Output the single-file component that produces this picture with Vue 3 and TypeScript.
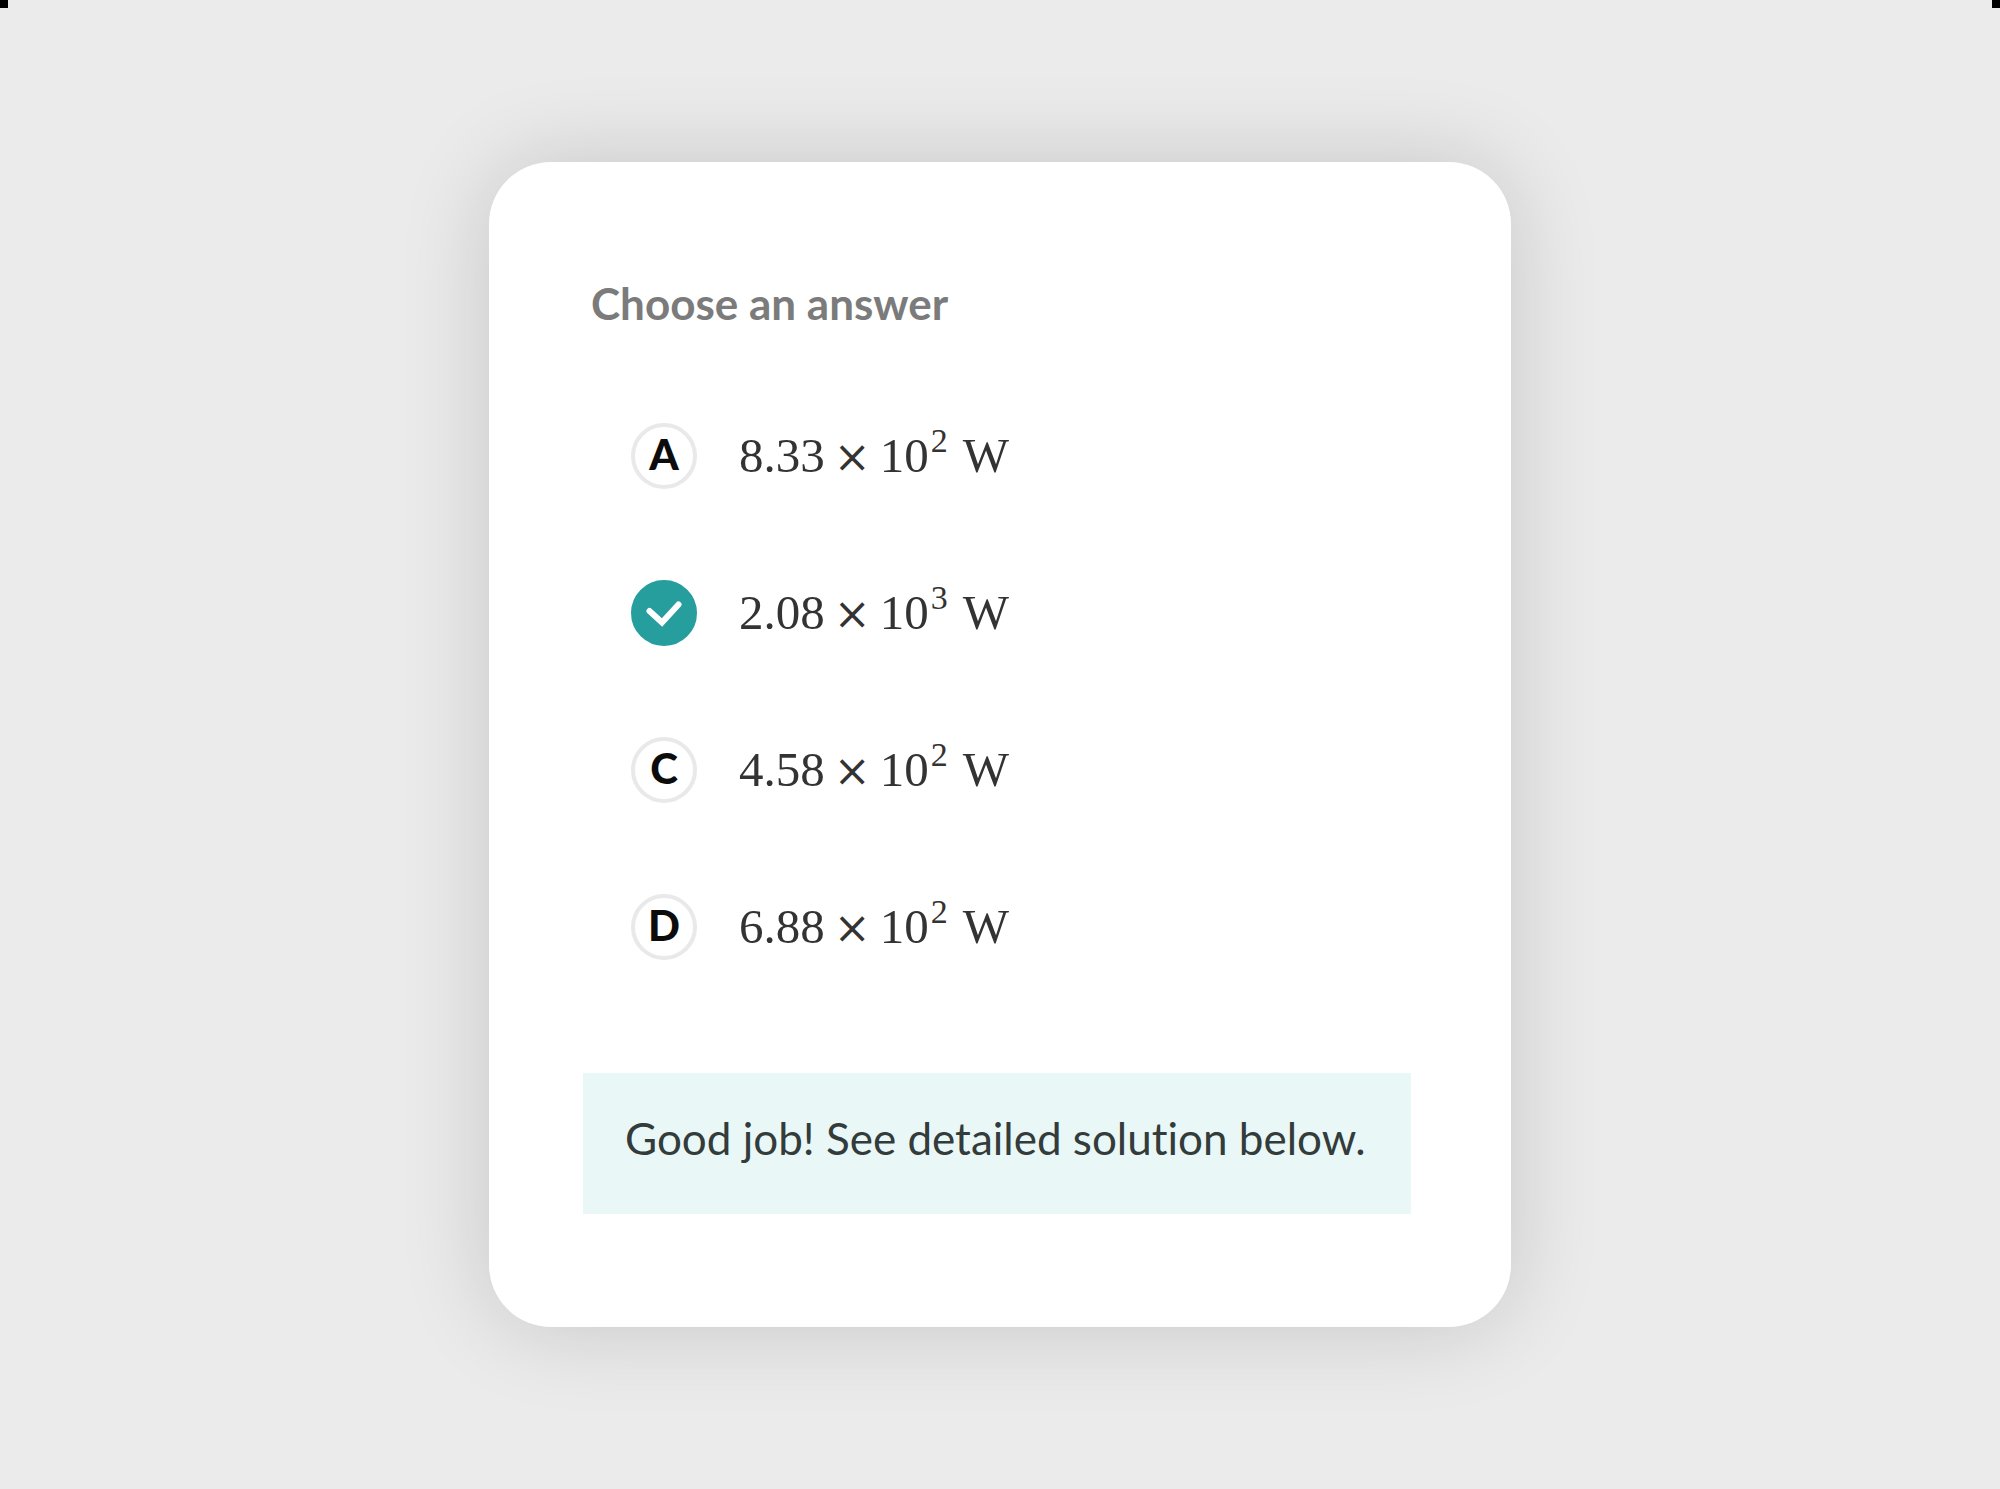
<script setup lang="ts">
import { ref } from 'vue'

interface Option {
  letter: string
  mantissa: string
  exponent: string
}

const options: Option[] = [
  { letter: 'A', mantissa: '8.33', exponent: '2' },
  { letter: 'B', mantissa: '2.08', exponent: '3' },
  { letter: 'C', mantissa: '4.58', exponent: '2' },
  { letter: 'D', mantissa: '6.88', exponent: '2' },
]

const correct = 'B'
const selected = ref<string>('B')
</script>

<template>
  <main class="page">
    <span class="corner corner-left" aria-hidden="true"></span>
    <span class="corner corner-right" aria-hidden="true"></span>
    <section class="card">
      <h1 id="question" class="title">Choose an answer</h1>
      <div class="options" role="radiogroup" aria-labelledby="question">
        <label v-for="option in options" :key="option.letter" class="option">
          <span class="badge">
            <input v-model="selected" class="radio" type="radio" name="answer" :value="option.letter" />
            <svg v-if="selected === option.letter" class="mark" viewBox="0 0 66 66" aria-hidden="true">
              <path d="M18.5 31 L31 42.5 L47.5 24.5" />
            </svg>
            <span v-else class="letter">{{ option.letter }}</span>
          </span>
          <span class="formula">
            <span>{{ option.mantissa }}</span>
            <span class="times">×</span>
            <span>10<sup class="exponent">{{ option.exponent }}</sup></span>
            <span class="unit">W</span>
          </span>
        </label>
      </div>
      <p v-if="selected === correct" class="feedback" role="status">Good job! See detailed solution below.</p>
    </section>
  </main>
</template>

<style>
body {
  margin: 0;
  background: #ebebeb;
}
</style>

<style scoped>
.page {
  position: relative;
  box-sizing: border-box;
  min-height: 100vh;
  padding: 162px 24px;
  background: #ebebeb;
  font-family: Lato, "Open Sans", sans-serif;
  font-variant-ligatures: none;
}

.corner {
  position: absolute;
  top: 0;
  width: 8px;
  height: 8px;
  background: #000;
}

.corner-left {
  left: 0;
}

.corner-right {
  right: 0;
}

.card {
  box-sizing: border-box;
  max-width: 1022px;
  margin: 0 auto;
  padding: 114px 100px 113px 94px;
  border-radius: 62px;
  background: #fff;
  box-shadow: 0 0 90px rgba(0, 0, 0, 0.16);
}

.title {
  margin: 0 0 93px 8px;
  color: #7b7b7b;
  font-size: 44px;
  font-weight: 700;
  line-height: 54px;
}

.options {
  display: flex;
  flex-direction: column;
  gap: 91px;
  padding-left: 48px;
}

.option {
  display: flex;
  align-items: center;
  gap: 42px;
  cursor: pointer;
}

.badge {
  display: grid;
  flex: none;
  place-items: center;
  width: 66px;
  height: 66px;
}

.radio,
.letter,
.mark {
  grid-area: 1 / 1;
}

.radio {
  box-sizing: border-box;
  width: 66px;
  height: 66px;
  margin: 0;
  border: 4px solid #e9e9e9;
  border-radius: 50%;
  background: #fff;
  appearance: none;
  cursor: pointer;
}

.radio:checked {
  border-color: #269e9e;
  background: #269e9e;
}

.letter {
  padding-bottom: 4px;
  color: #0c0c0c;
  font-size: 42px;
  font-weight: 900;
  line-height: 62px;
}

.mark {
  width: 66px;
  height: 66px;
  fill: none;
  stroke: #fff;
  stroke-width: 6;
  stroke-linecap: round;
}

.formula {
  display: flex;
  align-items: baseline;
  color: #333;
  font-family: "Liberation Serif", serif;
  font-size: 49px;
  line-height: 64px;
}

.times {
  margin: 0 9px;
  font-family: "DejaVu Serif", serif;
  font-size: 44px;
  line-height: 1;
}

.exponent {
  margin-left: 2px;
  font-size: 34px;
  line-height: 0;
  vertical-align: 20px;
}

.unit {
  margin-left: 15px;
}

.feedback {
  margin: 113px 0 0;
  padding: 38px 42px 49px;
  background: #e9f8f7;
  color: #333b3b;
  font-size: 44px;
  line-height: 54px;
}
</style>
